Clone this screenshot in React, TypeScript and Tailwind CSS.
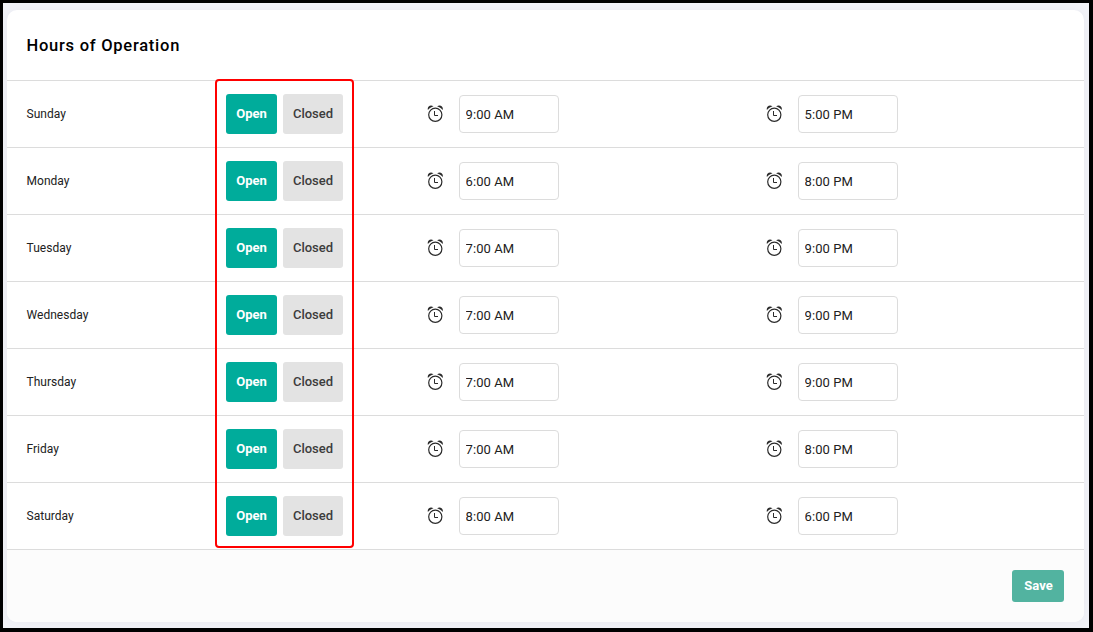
import React, { useState } from "react";

interface DayHours {
  day: string;
  open: string;
  close: string;
}

const HOURS: DayHours[] = [
  { day: "Sunday", open: "9:00 AM", close: "5:00 PM" },
  { day: "Monday", open: "6:00 AM", close: "8:00 PM" },
  { day: "Tuesday", open: "7:00 AM", close: "9:00 PM" },
  { day: "Wednesday", open: "7:00 AM", close: "9:00 PM" },
  { day: "Thursday", open: "7:00 AM", close: "9:00 PM" },
  { day: "Friday", open: "7:00 AM", close: "8:00 PM" },
  { day: "Saturday", open: "8:00 AM", close: "6:00 PM" },
];

function AlarmIcon() {
  return (
    <svg className="mb-px h-[17px] w-4 shrink-0" viewBox="0 0 16 17" fill="none" stroke="#2b2b2b">
      <circle cx="8.3" cy="9.8" r="6.6" strokeWidth="1.2" />
      <path d="M7.5 6v4.5h3.5" strokeWidth="1" />
      <path d="M.9 5C0 1.600 3.200-.6 6.500 1.300 4.200 2.200 2.400 3.300.9 5z" fill="#2b2b2b" stroke="none" />
      <path d="M15.700 5c.9-3.400-2.300-5.600-5.600-3.700 2.300.9 4.100 2 5.600 3.700z" fill="#2b2b2b" stroke="none" />
    </svg>
  );
}

function TimeField({ value }: { value: string }) {
  const [time, setTime] = useState(value);

  return (
    <div className="flex w-[339px] shrink-0 items-center gap-4">
      <AlarmIcon />
      <input
        type="text"
        value={time}
        onChange={(e) => setTime(e.target.value)}
        className="h-[38px] w-[100px] rounded-[4px] border border-[#dcdcdc] bg-white pl-[5.5px] pt-px text-[13px] tracking-[0.1px] text-[#212121] focus:outline-none"
      />
    </div>
  );
}

function DayRow({ day, open, close }: DayHours) {
  const [isOpen, setIsOpen] = useState(true);
  const active = "bg-[#00ac9b] font-bold text-white";
  const inactive = "bg-[#e3e3e3] font-medium text-[#3c3c3c]";

  return (
    <div className="flex h-[67px] items-center overflow-hidden border-t border-[#dcdcdc] pl-[19.5px]">
      <div className="w-[199.5px] shrink-0 text-[12px] tracking-[0.03px] text-[#212121]">{day}</div>
      <div className="flex w-[201px] shrink-0 gap-1.5 text-[13px]">
        <button onClick={() => setIsOpen(true)} className={`h-10 w-[51px] rounded-[3px] ${isOpen ? active : inactive}`}>
          Open
        </button>
        <button onClick={() => setIsOpen(false)} className={`h-10 w-[60px] rounded-[3px] ${isOpen ? inactive : active}`}>
          Closed
        </button>
      </div>
      <TimeField value={open} />
      <TimeField value={close} />
    </div>
  );
}

export default function App() {
  return (
    <div className="h-[632px] w-[1093px] border-[3px] border-r-4 border-b-4 border-black bg-[#f2f3f8] pl-1 pr-[5px] pt-[7px] font-['Roboto',sans-serif]">
      <div className="relative h-[612px] rounded-[10px] bg-white shadow-[0_0_12px_rgba(82,63,105,0.06)]">
        <div className="flex h-[70px] items-center pl-[19.5px]">
          <h2 className="pt-0.5 text-[16.5px] font-medium tracking-[0.75px] text-black">Hours of Operation</h2>
        </div>
        {HOURS.map((item) => (
          <DayRow key={item.day} {...item} />
        ))}
        <div className="flex h-[73px] items-center justify-end rounded-b-[10px] border-t border-[#dcdcdc] bg-[#fcfcfc] pr-5">
          <button className="h-8 w-[52px] rounded-[3px] bg-[#52b3a0] pl-px text-[13px] font-bold text-white">Save</button>
        </div>

        {/* highlight around the status buttons */}
        <div className="pointer-events-none absolute left-[208px] top-[69px] h-[469px] w-[139px] rounded-[4px] border-2 border-[#ff0000]" />
      </div>
    </div>
  );
}
